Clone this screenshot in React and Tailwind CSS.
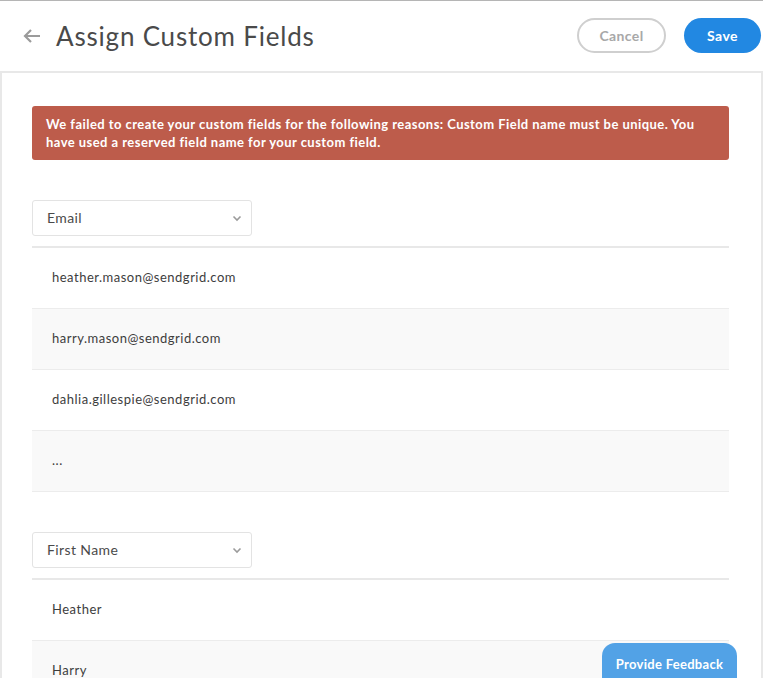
import React from "react";

const font = { fontFamily: "Lato, 'Open Sans', sans-serif" };

function Chevron() {
  return (
    <svg width="10" height="7" viewBox="0 0 10 7" className="text-[#9b9b9b]">
      <path d="M1.5 1.5 L5 5 L8.5 1.5" fill="none" stroke="currentColor" strokeWidth="1.6" />
    </svg>
  );
}

function FieldGroup({ label, rows }) {
  return (
    <div className="flex flex-col">
      <div className="flex h-[36px] w-[220px] items-center justify-between rounded-[3px] border border-[#e3e3e3] bg-white pl-[14px] pr-[9px] text-[14px] tracking-[0.4px] text-[#4a4a4a]">
        <span className="pb-[1px]">{label}</span>
        <Chevron />
      </div>
      <div className="mt-[10px] border-t-2 border-[#e8e8e8]">
        {rows.map((r, i) => (
          <div
            key={i}
            className={`flex h-[61px] items-center border-b border-[#ececec] pl-[20px] text-[13px] tracking-[0.5px] text-[#3d3d3d] ${i % 2 === 1 ? "bg-[#f9f9f9]" : "bg-white"}`}
          >
            {r}
          </div>
        ))}
      </div>
    </div>
  );
}

export default function App() {
  return (
    <div className="relative h-[678px] w-[763px] overflow-hidden bg-white" style={font}>
      <div className="w-[763px] border-t border-[#b5b5b5]">
        <div className="flex h-[70px] items-center justify-between pl-[22px] pr-[2px]">
          <div className="flex items-center">
            <svg width="20" height="16" viewBox="0 0 20 16" className="text-[#9b9b9b]">
              <path d="M18 8 H3 M9 2 L3 8 L9 14" fill="none" stroke="currentColor" strokeWidth="2.2" />
            </svg>
            <h1 className="ml-[14px] text-[26px] font-normal tracking-[0.8px] text-[#4a4a4a]">Assign Custom Fields</h1>
          </div>
          <div className="flex items-center gap-[18px] pb-[1px]">
            <button className="h-[35px] w-[89px] rounded-full border-2 border-[#cfcfcf] bg-white text-[14px] font-bold tracking-[0.4px] text-[#a8a8a8]">
              Cancel
            </button>
            <button className="h-[35px] w-[77px] rounded-full bg-[#2288e2] text-[14px] font-bold tracking-[0.4px] text-white">
              Save
            </button>
          </div>
        </div>
        <div className="h-[607px] w-[763px] border-x-2 border-t-2 border-[#e8e8e8] pl-[30px] pt-[33px]">
          <div className="w-[697px] rounded-[3px] bg-[#bd5c4b] px-[14px] py-[9px] text-[13px] font-bold leading-[18px] tracking-[0.45px] text-white">
            We failed to create your custom fields for the following reasons: Custom Field name must be unique. You have used a reserved field name for your custom field.
          </div>
          <div className="mt-[40px] w-[697px]">
            <FieldGroup
              label="Email"
              rows={["heather.mason@sendgrid.com", "harry.mason@sendgrid.com", "dahlia.gillespie@sendgrid.com", "..."]}
            />
          </div>
          <div className="mt-[40px] w-[697px]">
            <FieldGroup label="First Name" rows={["Heather", "Harry"]} />
          </div>
        </div>
      </div>
      <div className="absolute left-[602px] top-[643px] flex h-[40px] w-[135px] justify-center rounded-t-[13px] bg-[#52a2e6] pt-[12px] text-[13px] font-bold tracking-[0.3px] text-white">
        Provide Feedback
      </div>
    </div>
  );
}
